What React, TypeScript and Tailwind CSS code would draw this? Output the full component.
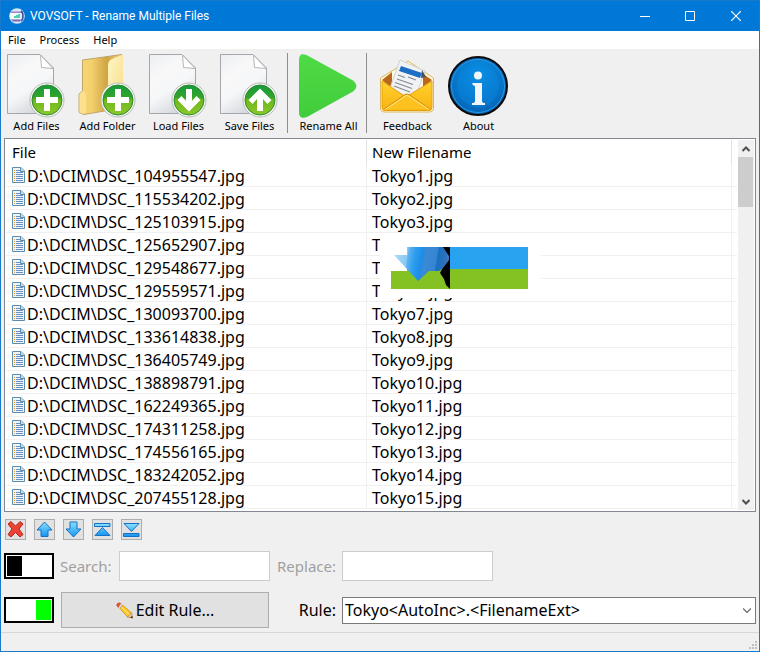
import { useState, type ReactNode } from 'react'

interface FileRow {
  path: string
  next: string
}

const numbers = [
  '104955547', '115534202', '125103915', '125652907', '129548677',
  '129559571', '130093700', '133614838', '136405749', '138898791',
  '162249365', '174311258', '174556165', '183242052', '207455128',
]

const files: FileRow[] = numbers.map((n, i) => ({
  path: `D:\\DCIM\\DSC_${n}.jpg`,
  next: `Tokyo${i + 1}.jpg`,
}))

/* Shared gradients, referenced by id from the icons */
function Gradients() {
  return (
    <svg className="absolute h-0 w-0" aria-hidden="true">
      <defs>
        <linearGradient id="paper" x1="0" y1="0" x2="0.5" y2="1">
          <stop offset="0" stopColor="#eceef0" />
          <stop offset="0.35" stopColor="#f8f8f9" />
          <stop offset="0.65" stopColor="#f6f7f8" />
          <stop offset="1" stopColor="#d6dade" />
        </linearGradient>
        <linearGradient id="badge" x1="0" y1="0" x2="0" y2="1">
          <stop offset="0" stopColor="#149a3c" />
          <stop offset="0.42" stopColor="#35a52c" />
          <stop offset="0.5" stopColor="#6fb81c" />
          <stop offset="1" stopColor="#8cc82c" />
        </linearGradient>
        <linearGradient id="folder" x1="0" y1="0" x2="1" y2="0">
          <stop offset="0" stopColor="#f9d978" />
          <stop offset="0.3" stopColor="#f3cf6c" />
          <stop offset="0.65" stopColor="#cfa443" />
          <stop offset="1" stopColor="#f4d988" />
        </linearGradient>
        <linearGradient id="flap" x1="0" y1="0" x2="1" y2="1">
          <stop offset="0" stopColor="#fff6c4" />
          <stop offset="1" stopColor="#f6dc85" />
        </linearGradient>
        <linearGradient id="play" x1="0" y1="0" x2="0" y2="1">
          <stop offset="0" stopColor="#4fdb45" />
          <stop offset="1" stopColor="#41cc3b" />
        </linearGradient>
        <linearGradient id="envelope" x1="0" y1="0" x2="0" y2="1">
          <stop offset="0" stopColor="#ffd22e" />
          <stop offset="1" stopColor="#f9b312" />
        </linearGradient>
        <radialGradient id="info" cx="0.5" cy="0.3" r="0.7">
          <stop offset="0" stopColor="#0a94e8" />
          <stop offset="1" stopColor="#0465b8" />
        </radialGradient>
        <linearGradient id="arrow" x1="0" y1="0" x2="0" y2="1">
          <stop offset="0" stopColor="#8be0ff" />
          <stop offset="1" stopColor="#1793f0" />
        </linearGradient>
        <linearGradient id="bird" x1="0" y1="0.4" x2="1" y2="0.5">
          <stop offset="0" stopColor="#a9dcf8" />
          <stop offset="0.22" stopColor="#8cc8f2" />
          <stop offset="0.24" stopColor="#5fb4f0" />
          <stop offset="0.36" stopColor="#2d9df0" />
          <stop offset="0.5" stopColor="#1d8ce6" />
          <stop offset="0.55" stopColor="#3a8ad6" />
          <stop offset="0.75" stopColor="#3585d2" />
          <stop offset="0.78" stopColor="#1a70c0" />
          <stop offset="0.9" stopColor="#2a70bc" />
          <stop offset="1" stopColor="#4a77b8" />
        </linearGradient>
      </defs>
    </svg>
  )
}

function Drawing({ children }: { children: ReactNode }) {
  return (
    <svg viewBox="0 0 71 68" className="h-[68px] w-[71px]" aria-hidden="true">
      {children}
    </svg>
  )
}

function Paper() {
  return (
    <g strokeLinejoin="round">
      <path d="M6.500 4.500H39L52.500 18V63.500H6.500Z" fill="url(#paper)" stroke="#a3a7ab" />
      <path d="M39.500 5L40.500 17.500L52 18.500Z" fill="#fff" stroke="#b4b7ba" />
    </g>
  )
}

function Badge({ children }: { children: ReactNode }) {
  return (
    <g>
      <circle cx="46" cy="50" r="17" fill="#f6f8f4" stroke="#b9bcb9" />
      <circle cx="46" cy="50" r="15" fill="url(#badge)" stroke="#2b8a2e" />
      <g fill="#fff">{children}</g>
    </g>
  )
}

const plus = <path d="M43 39H49V47H57V53H49V61H43V53H35V47H43Z" />
const arrowDown = <path d="M43 39H49V51L53.500 46L57.500 50L46 61.500L34.500 50L38.500 46L43 51Z" />
const arrowUp = <path d="M43 61H49V49L53.500 54L57.500 50L46 38.500L34.500 50L38.500 54L43 49Z" />

function AddFilesIcon() {
  return <Drawing><Paper /><Badge>{plus}</Badge></Drawing>
}

function LoadFilesIcon() {
  return <Drawing><Paper /><Badge>{arrowDown}</Badge></Drawing>
}

function SaveFilesIcon() {
  return <Drawing><Paper /><Badge>{arrowUp}</Badge></Drawing>
}

function AddFolderIcon() {
  return (
    <Drawing>
      <path d="M10.500 10L50 4.500V58L12 64.500L7 62.500V44L10.500 41Z" fill="url(#folder)" stroke="#c0a468" />
      <path d="M36 15Q36 11 40 9L51 4.500V54L36 60Z" fill="url(#flap)" />
      <path d="M11 41L7.500 44V62.500L12 64L14 62V43Z" fill="#fbe08d" />
      <Badge>{plus}</Badge>
    </Drawing>
  )
}

function RenameIcon() {
  return (
    <Drawing>
      <path d="M6 10Q6 2 13.500 5L60 30.500Q67 36 60 41.500L14 67Q6 70 6 62Z" fill="url(#play)" />
    </Drawing>
  )
}

function FeedbackIcon() {
  return (
    <Drawing>
      <path d="M8.500 28L36 11L61.500 28V58Q61.500 62 57 62H13Q8.500 62 8.500 58Z" fill="#fff8dc" stroke="#d9b95c" />
      <path d="M10 30L20 22V38ZM60 30L51 24V38Z" fill="#b8671d" />
      <path d="M28 10L53 21L43 48L17 41Z" fill="#f1f2f4" stroke="#d0d3d8" />
      <path d="M29 16L50 23L48 28L27 21Z" fill="#1c6fc4" />
      <path d="M50 20L54 27L49 28Z" fill="#4a5058" />
      <g stroke="#858b93" strokeWidth="1.200">
        <path d="M26 25L33 27.500M25 29L41 34.500M23 32.500L40 38.500M22 36L38 42M36 27L44 30" />
      </g>
      <path d="M10 31L34 47L60 31V57Q60 60.500 57 60.500H13Q10 60.500 10 57Z" fill="url(#envelope)" stroke="#e5a012" />
      <path d="M11.500 59.500L33 44.500Q35 43.500 37 44.500L58.500 59.500" fill="#fdc21d" stroke="#d68c0c" />
      <path d="M13 59.500L33.500 46Q35 45 36.500 46L57 59.500" fill="none" stroke="#fff0b0" strokeWidth="0.800" />
    </Drawing>
  )
}

function AboutIcon() {
  return (
    <Drawing>
      <circle cx="35" cy="36" r="29" fill="#0b63ad" stroke="#0a0a0c" strokeWidth="2" />
      <circle cx="35" cy="36" r="26.500" fill="url(#info)" stroke="#2a9ae6" />
      <circle cx="35" cy="36" r="21" fill="#0a86dd" fillOpacity="0.450" />
      <circle cx="35" cy="25.500" r="4" fill="#f1f6fa" />
      <path d="M29.500 33H39V51Q39 53 42 53V55H29V53Q32 53 32 51V37Q32 35 29.500 35Z" fill="#f1f6fa" />
    </Drawing>
  )
}

function AppIcon() {
  return (
    <svg viewBox="0 0 16 16" className="h-4 w-4 shrink-0" aria-hidden="true">
      <circle cx="8" cy="8" r="7.800" fill="#d5e6f5" />
      <path d="M2 3.500H12L13 5H1Z" fill="#9d86cf" />
      <path d="M2 11.500H12L11 13.500H4Z" fill="#8467bd" />
      <path d="M1 5H11.500V11H1Z" fill="#f4fbfb" />
      <path d="M5 8H7V7H9V6H11V10H5Z" fill="#4fd0b4" />
      <path d="M12 3Q14 4 14 8T12 13" fill="none" stroke="#3c4d96" strokeWidth="1.500" />
    </svg>
  )
}

function FileIcon() {
  return (
    <svg viewBox="0 0 13 16" className="h-4 w-[13px] shrink-0" aria-hidden="true">
      <path d="M0.500 0.500H9L12.500 4V15.500H0.500Z" fill="#eef6fb" stroke="#5b8cab" />
      <path d="M8.500 0.500V4.500H12.500" fill="#c5dcea" stroke="#5b8cab" />
      <path d="M2.500 3V14" stroke="#e8962e" strokeDasharray="1 1" />
      <path d="M4 3.500H8M4 5.500H11M4 7.500H11M4 9.500H11M4 11.500H11M4 13.500H11" stroke="#6a8fc4" />
    </svg>
  )
}

function PencilIcon() {
  return (
    <svg viewBox="0 0 17 17" className="h-[17px] w-[17px]" aria-hidden="true">
      <path d="M1 2Q3 0 5 1.500L2.500 5.500Q0 4 1 2Z" fill="#e9573f" stroke="#b83a28" strokeWidth="0.600" />
      <path d="M5 1.500L6.500 3L4 6.500L2.500 5.500Z" fill="#d8dce2" />
      <path d="M6.500 3L15.500 11L12 15.500L4 6.500Z" fill="#ffc81e" stroke="#c98210" strokeWidth="0.700" />
      <path d="M5.500 5L14 13.500" stroke="#fff0a0" />
      <path d="M15.500 10.500L16.500 16L11.500 15Z" fill="#f0c99a" stroke="#a8682c" strokeWidth="0.500" />
      <path d="M16.700 16.300L14 15.800L16.300 13.800Z" fill="#3a2c24" />
    </svg>
  )
}

function ScrollArrow({ up = false }: { up?: boolean }) {
  return (
    <svg viewBox="0 0 8 6" className="h-[6px] w-2" aria-hidden="true">
      <path d={up ? 'M0.500 5L4 1.500L7.500 5' : 'M0.500 1L4 4.500L7.500 1'} fill="none" stroke="#505050" strokeWidth="2" />
    </svg>
  )
}

const tools = [
  { label: 'Add Files', icon: <AddFilesIcon /> },
  { label: 'Add Folder', icon: <AddFolderIcon /> },
  { label: 'Load Files', icon: <LoadFilesIcon /> },
  { label: 'Save Files', icon: <SaveFilesIcon /> },
  { label: 'Rename All', icon: <RenameIcon />, divided: true },
  { label: 'Feedback', icon: <FeedbackIcon />, divided: true },
  { label: 'About', icon: <AboutIcon /> },
]

const listActions = [
  {
    label: 'Remove',
    drawing: <path d="M1 3L4 0.500L8.500 5L13 0.500L16 3L12 8L16 13.500L13 16L8.500 11.500L4 16L1 13.500L5 8Z" fill="#ea4335" stroke="#b3261e" />,
  },
  {
    label: 'Move up',
    drawing: <path d="M8.500 1L16 9H12V15.500H5V9H1Z" fill="url(#arrow)" stroke="#1273c4" />,
  },
  {
    label: 'Move down',
    drawing: <path d="M8.500 16L1 8H5V1H12V8H16Z" fill="url(#arrow)" stroke="#1273c4" />,
  },
  {
    label: 'Move to top',
    drawing: <path d="M0.500 2.500H16V5.500H0.500ZM8.500 6.500L16 14.500H1Z" fill="url(#arrow)" stroke="#1273c4" />,
  },
  {
    label: 'Move to bottom',
    drawing: <path d="M0.500 12.500H16V15.500H0.500ZM8.500 10.500L1 2.500H16Z" fill="url(#arrow)" stroke="#1273c4" />,
  },
]

function TitleBar() {
  return (
    <header className="flex h-[30px] items-center bg-[#0078d7] pl-2 text-white">
      <AppIcon />
      <h1 className="ml-[5px] flex-1 truncate font-[Roboto,sans-serif] text-xs">
        VOVSOFT - Rename Multiple Files
      </h1>
      <button aria-label="Minimize" className="flex h-full w-[45px] items-center justify-center">
        <svg viewBox="0 0 10 10" className="h-[10px] w-[10px]"><path d="M0 5.500H10" stroke="#fff" /></svg>
      </button>
      <button aria-label="Maximize" className="flex h-full w-[45px] items-center justify-center">
        <svg viewBox="0 0 10 10" className="h-[10px] w-[10px]"><path d="M0.500 0.500H9.500V9.500H0.500Z" fill="none" stroke="#fff" /></svg>
      </button>
      <button aria-label="Close" className="flex h-full w-[47px] items-center justify-center">
        <svg viewBox="0 0 10 10" className="h-[10px] w-[10px]"><path d="M0 0L10 10M10 0L0 10" stroke="#fff" strokeWidth="1.200" /></svg>
      </button>
    </header>
  )
}

function MenuBar() {
  return (
    <nav className="flex h-[18px] items-center gap-[14px] bg-white pl-[7px] text-[11px]">
      <button>File</button>
      <button>Process</button>
      <button>Help</button>
    </nav>
  )
}

function Toolbar() {
  return (
    <div className="flex pt-px pb-1">
      {tools.map((t) => (
        <div key={t.label} className="flex shrink-0">
          {t.divided && <span className="mt-[3px] mr-[5px] mb-px ml-[2px] w-px bg-[#8e8e8e]" />}
          <button className="flex w-[71px] flex-col items-center text-[11px] leading-4 whitespace-nowrap">
            {t.icon}
            {t.label}
          </button>
        </div>
      ))}
    </div>
  )
}

/* Logo that floats over the list */
function Logo() {
  return (
    <div className="absolute top-[99px] left-[375px] h-[60px] w-[161px] bg-white pt-[9px] pl-[11px]">
      <svg viewBox="0 0 137 42" className="h-[42px] w-[137px]" aria-hidden="true">
        <path d="M16 0H137V22H16Z" fill="#28a3ef" />
        <path d="M0 24H16V22H137V42H0Z" fill="#84c122" />
        <path d="M50 0H59V42L55 38L53 32L49 26L52 20L58 12Z" fill="#000" />
        <path d="M3 8H16V0H52L58 9V13L52 21L48 24H38L27 34Z" fill="url(#bird)" />
      </svg>
    </div>
  )
}

function FileList() {
  return (
    <section className="relative mx-[3px] flex overflow-hidden border border-[#828790] bg-white p-px">
      <table className="mb-px flex-1 table-fixed border-separate border-spacing-0 text-left">
        <colgroup>
          <col className="w-[361px]" />
          <col className="w-[365px]" />
          <col />
        </colgroup>
        <thead>
          <tr className="h-6 text-[15px]">
            <th className="border-r border-[#e2e2e2] p-0 pl-[6px] font-normal">File</th>
            <th className="border-r border-[#e2e2e2] p-0 pl-[5px] font-normal">New Filename</th>
            <td className="p-0" />
          </tr>
        </thead>
        <tbody>
          {files.map((f) => (
            <tr key={f.path} className="h-[23px] leading-5">
              <td className="border-r border-b border-[#f0f0f0] p-0 pl-[6px]">
                <div className="flex items-center gap-[2px]">
                  <FileIcon />
                  <span className="pt-[2px]">{f.path}</span>
                </div>
              </td>
              <td className="border-r border-b border-[#f0f0f0] p-0 pt-[2px] pl-[5px]">{f.next}</td>
              <td className="border-b border-[#f0f0f0] p-0" />
            </tr>
          ))}
        </tbody>
      </table>
      <div className="ml-px flex w-4 flex-col bg-[#f0f0f0]">
        <button aria-label="Scroll up" className="flex h-[17px] items-center justify-center"><ScrollArrow up /></button>
        <div className="mr-px h-[50px] bg-[#cdcdcd]" />
        <button aria-label="Scroll down" className="mt-auto flex h-[17px] items-center justify-center"><ScrollArrow /></button>
      </div>
      <Logo />
    </section>
  )
}

function Toggle({ label, on = false }: { label: string; on?: boolean }) {
  const [checked, setChecked] = useState(on)
  return (
    <input
      type="checkbox"
      aria-label={label}
      checked={checked}
      onChange={() => setChecked(!checked)}
      className="flex h-[26px] w-[50px] appearance-none self-center border-2 border-black bg-white p-px before:w-[15px] before:bg-black checked:justify-end checked:before:bg-[#00ff00]"
    />
  )
}

export default function App() {
  return (
    <div className="flex min-h-screen flex-col overflow-hidden border border-[#1979ca] bg-[#f0f0f0] font-['Noto_Sans',sans-serif] text-base text-black">
      <Gradients />
      <TitleBar />
      <MenuBar />
      <Toolbar />
      <FileList />

      <div className="flex gap-2 px-1 pt-[7px]">
        {listActions.map((a) => (
          <button key={a.label} aria-label={a.label} className="flex h-[21px] w-[21px] items-center justify-center border border-[#adadad] bg-[#e1e1e1]">
            <svg viewBox="0 0 17 17" className="h-[17px] w-[17px]">{a.drawing}</svg>
          </button>
        ))}
      </div>

      <div className="mx-[3px] mt-[11px] mb-1 grid grid-cols-[50px_210px_60px_1fr] items-center gap-x-[6px] gap-y-[11px]">
        <Toggle label="Search and replace" />
        <div className="flex items-center justify-between">
          <label htmlFor="search" className="text-[15px] text-[#a0a0a0]">Search:</label>
          <input id="search" disabled className="h-[30px] w-[151px] border border-[#cccccc] bg-white px-1" />
        </div>
        <label htmlFor="replace" className="justify-self-end text-[15px] text-[#a0a0a0]">Replace:</label>
        <input id="replace" disabled className="h-[30px] w-[151px] border border-[#cccccc] bg-white px-1" />

        <Toggle label="Use rule" on />
        <button className="mx-px flex h-9 items-center justify-center gap-[3px] border border-[#adadad] bg-[#e1e1e1]">
          <PencilIcon />
          Edit Rule...
        </button>
        <label htmlFor="rule" className="justify-self-end">Rule:</label>
        <div className="relative">
          <select id="rule" className="block h-[27px] w-full appearance-none border border-[#7a7a7a] bg-white pr-5 pl-[2px]">
            <option>{'Tokyo<AutoInc>.<FilenameExt>'}</option>
          </select>
          <svg viewBox="0 0 8 27" className="pointer-events-none absolute top-0 right-[5px] h-[27px] w-2" aria-hidden="true">
            <path d="M0 11.500L4 15.500L8 11.500" fill="none" stroke="#606060" strokeWidth="1.200" />
          </svg>
        </div>
      </div>

      <footer className="flex h-[19px] items-end justify-end border-t border-[#d7d7d7] p-[2px]">
        <svg viewBox="0 0 8 8" className="h-2 w-2" aria-hidden="true">
          <path d="M6 0H8V2H6ZM3 3H5V5H3ZM6 3H8V5H6ZM0 6H2V8H0ZM3 6H5V8H3ZM6 6H8V8H6Z" fill="#bfbfbf" />
        </svg>
      </footer>
    </div>
  )
}
